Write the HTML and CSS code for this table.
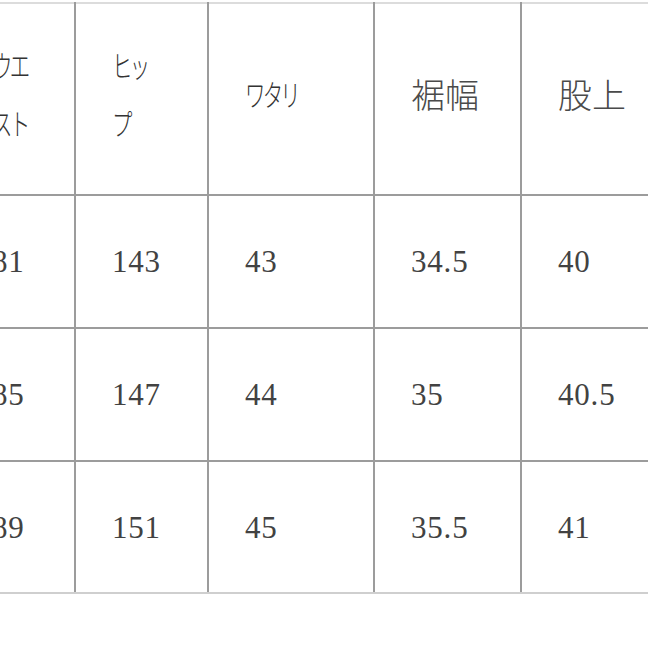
FILE: index.html
```html
<!DOCTYPE html>
<html lang="ja">
<head>
<meta charset="utf-8">
<title>サイズ表</title>
<link rel="stylesheet" href="styles.css">
</head>
<body>
<div class="viewport">
<table class="size-table">
  <colgroup>
    <col class="c1"><col class="c2"><col class="c3"><col class="c4"><col class="c5">
  </colgroup>
  <thead>
    <tr class="head">
      <th class="first"><span class="kana">ウエ<br>スト</span></th>
      <th><span class="kana">ヒッ<br>プ</span></th>
      <th><span class="kana">ワタリ</span></th>
      <th><span class="kanji">裾幅</span></th>
      <th><span class="kanji">股上</span></th>
    </tr>
  </thead>
  <tbody>
    <tr><td class="first">81</td><td>143</td><td>43</td><td>34.5</td><td>40</td></tr>
    <tr><td class="first">85</td><td>147</td><td>44</td><td>35</td><td>40.5</td></tr>
    <tr class="last"><td class="first">89</td><td>151</td><td>45</td><td>35.5</td><td>41</td></tr>
  </tbody>
</table>
</div>
</body>
</html>
```

FILE: styles.css
```css
html, body {
  margin: 0;
  padding: 0;
  background: #ffffff;
}

.viewport {
  width: 648px;
  height: 648px;
  overflow: hidden;
  padding-top: 2px;
  box-sizing: border-box;
}

.size-table {
  border-collapse: collapse;
  table-layout: fixed;
  width: 772px;
  margin-left: -52px;
  color: #424242;
}

.c1 { width: 126px; }
.c2 { width: 133px; }
.c3 { width: 166px; }
.c4 { width: 147px; }
.c5 { width: 200px; }

.size-table th,
.size-table td {
  border: 2px solid #9c9c9c;
  text-align: left;
  vertical-align: middle;
  padding: 0 0 0 36px;
  font-weight: normal;
}

.size-table .first {
  padding-left: 42px;
}

.size-table th {
  border-top: 2px solid #dcdcdc;
  height: 178px;
  padding-bottom: 12px;
}

.size-table td {
  height: 130px;
  font-family: "Liberation Serif", "Times New Roman", serif;
  font-size: 31px;
  letter-spacing: 0.8px;
  padding-top: 1px;
}

.size-table tr.last td {
  border-bottom: 2px solid #cfcfcf;
  height: 129px;
}

.kana {
  display: inline-block;
  font-family: "Noto Sans CJK JP", sans-serif;
  font-weight: 300;
  font-size: 30px;
  line-height: 58px;
  letter-spacing: -4px;
  color: #333333;
  transform: scaleX(0.68);
  transform-origin: left center;
}

.kanji {
  font-family: "Noto Sans CJK JP", sans-serif;
  font-weight: 300;
  font-size: 34px;
  color: #4a4a4a;
}
```
